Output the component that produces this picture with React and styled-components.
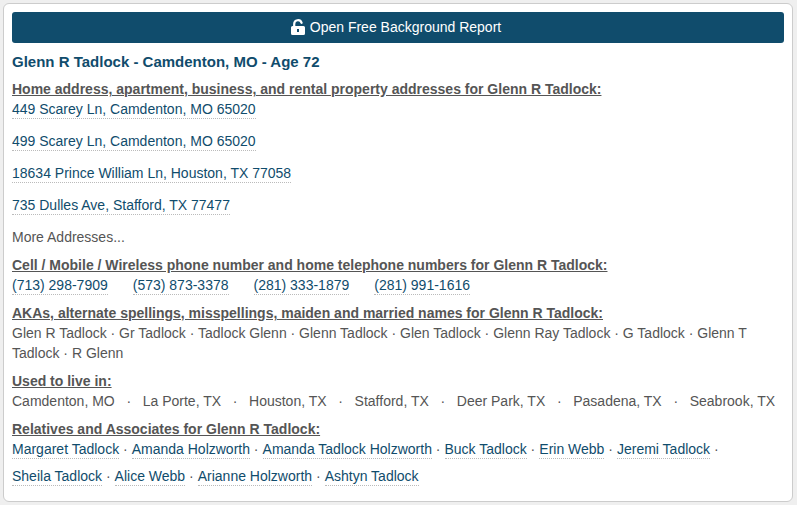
import React from "react";
import styled, { createGlobalStyle } from "styled-components";

const GlobalStyle = createGlobalStyle`
  * { box-sizing: border-box; }
  body {
    margin: 0;
    background: #efefef;
    color: #555555;
    font-family: "Liberation Sans", Arial, sans-serif;
    font-size: 14px;
    line-height: 20px;
  }
`;

const Card = styled.main`
  margin: 3px 4px 3px 3px;
  padding: 8px 8px 7px;
  border: 1px solid #cccccc;
  border-radius: 6px;
  background: #ffffff;
`;

const ReportButton = styled.button`
  display: flex;
  align-items: center;
  justify-content: center;
  gap: 5px;
  width: 100%;
  padding: 5px 4px 6px 0;
  border: 0;
  border-radius: 3px;
  background: #104c6c;
  color: #ffffff;
  font: 14px/20px "Liberation Sans", Arial, sans-serif;
  cursor: pointer;
`;

const Name = styled.h1`
  margin: 8px 0 6px;
  color: #104c6c;
  font-size: 15px;
  line-height: 22px;
`;

const Section = styled.section`
  margin-bottom: 8px;
`;

const Heading = styled.h2`
  margin: 0;
  font-size: 14px;
  line-height: 20px;
  text-decoration: underline;
`;

const List = styled.ul`
  display: flex;
  flex-direction: ${(p) => (p.$column ? "column" : "row")};
  flex-wrap: wrap;
  gap: ${(p) => p.$gap || "0"};
  margin: 0;
  padding: 0;
  list-style: none;
`;

const Text = styled.p`
  margin: 0;
`;

const DataLink = styled.a`
  padding-bottom: 1px;
  border-bottom: 1px dotted #bbbbbb;
  color: #104c6c;
  text-decoration: none;
`;

const addresses = [
  "449 Scarey Ln, Camdenton, MO 65020",
  "499 Scarey Ln, Camdenton, MO 65020",
  "18634 Prince William Ln, Houston, TX 77058",
  "735 Dulles Ave, Stafford, TX 77477",
];
const phones = ["(713) 298-7909", "(573) 873-3378", "(281) 333-1879", "(281) 991-1616"];
const akas = ["Glen R Tadlock", "Gr Tadlock", "Tadlock Glenn", "Glenn Tadlock", "Glen Tadlock", "Glenn Ray Tadlock", "G Tadlock", "Glenn T Tadlock", "R Glenn"];
const places = ["Camdenton, MO", "La Porte, TX", "Houston, TX", "Stafford, TX", "Deer Park, TX", "Pasadena, TX", "Seabrook, TX"];
const relatives = ["Margaret Tadlock", "Amanda Holzworth", "Amanda Tadlock Holzworth", "Buck Tadlock", "Erin Webb", "Jeremi Tadlock", "Sheila Tadlock", "Alice Webb", "Arianne Holzworth", "Ashtyn Tadlock"];

const UnlockIcon = () => (
  <svg width="14" height="16" viewBox="0 0 14 16" aria-hidden="true">
    <path d="M3.2 8V5a3.8 3.8 0 0 1 7.4-1.2" fill="none" stroke="#fff" strokeWidth="2.2" strokeLinecap="round" />
    <path
      d="M1.5 7h11A1.5 1.5 0 0 1 14 8.500V14.500A1.500 1.500 0 0 1 12.500 16H1.500A1.500 1.500 0 0 1 0 14.500V8.500A1.500 1.500 0 0 1 1.500 7ZM6 10v3h2v-3Z"
      fill="#fff"
      fillRule="evenodd"
    />
  </svg>
);

export default function App() {
  return (
    <>
      <GlobalStyle />
      <Card>
        <ReportButton type="button">
          <UnlockIcon />
          Open Free Background Report
        </ReportButton>
        <Name>Glenn R Tadlock - Camdenton, MO - Age 72</Name>
        <Section>
          <Heading>Home address, apartment, business, and rental property addresses for Glenn R Tadlock:</Heading>
          <List $column $gap="12px">
            {addresses.map((a) => <li key={a}><DataLink href="#">{a}</DataLink></li>)}
            <li>More Addresses...</li>
          </List>
        </Section>
        <Section>
          <Heading>Cell / Mobile / Wireless phone number and home telephone numbers for Glenn R Tadlock:</Heading>
          <List $gap="0 25px">
            {phones.map((p) => <li key={p}><DataLink href="#">{p}</DataLink></li>)}
          </List>
        </Section>
        <Section>
          <Heading>AKAs, alternate spellings, misspellings, maiden and married names for Glenn R Tadlock:</Heading>
          <Text>{akas.join(" · ")}</Text>
        </Section>
        <Section>
          <Heading>Used to live in:</Heading>
          <Text>{places.join(" \u00a0 · \u00a0 ")}</Text>
        </Section>
        <Section>
          <Heading>Relatives and Associates for Glenn R Tadlock:</Heading>
          <List $gap="7px 4px">
            {relatives.map((r, i) => (
              <li key={r}>
                <DataLink href="#">{r}</DataLink>
                {i < relatives.length - 1 && " ·"}
              </li>
            ))}
          </List>
        </Section>
      </Card>
    </>
  );
}
